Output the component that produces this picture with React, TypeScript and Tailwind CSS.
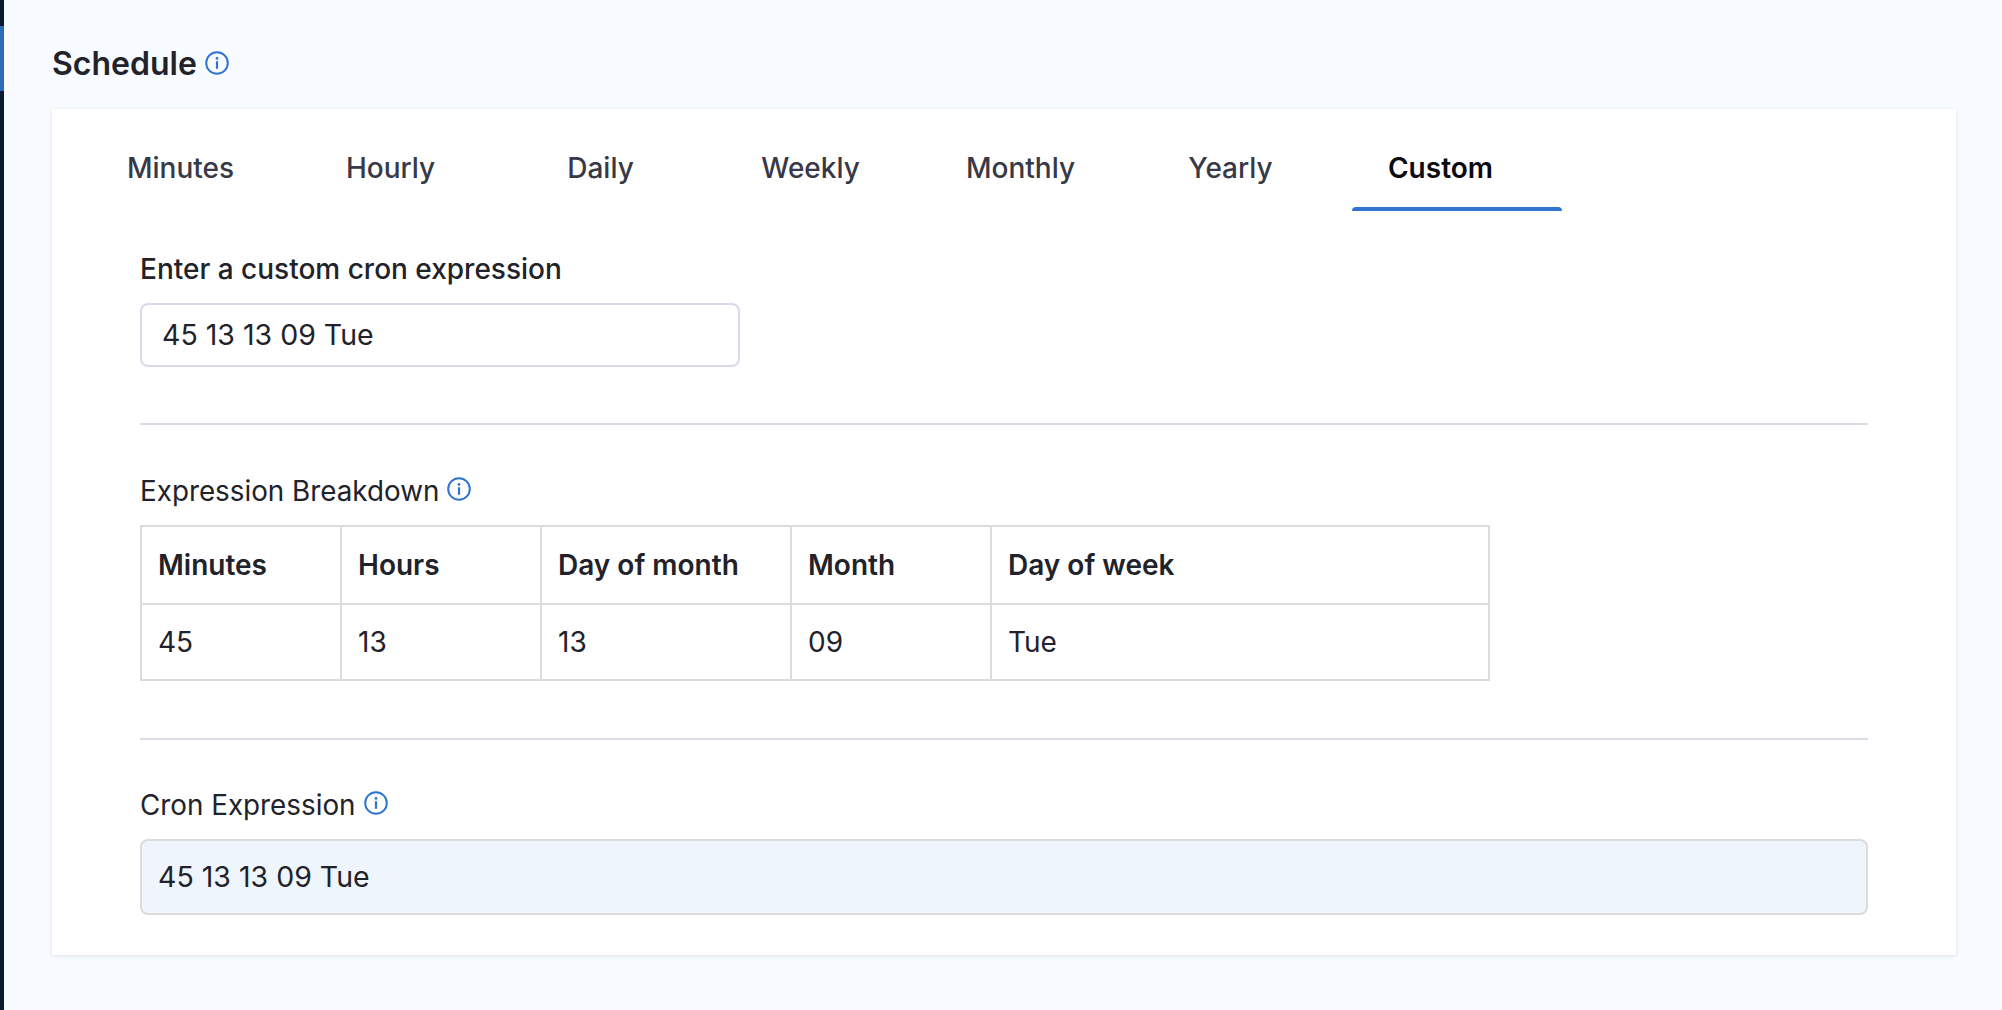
import React from 'react'

const tabs = ['Minutes', 'Hourly', 'Daily', 'Weekly', 'Monthly', 'Yearly', 'Custom']
const columns = [
  { label: 'Minutes', value: '45', width: 'w-[200px]' },
  { label: 'Hours', value: '13', width: 'w-[200px]' },
  { label: 'Day of month', value: '13', width: 'w-[250px]' },
  { label: 'Month', value: '09', width: 'w-[200px]' },
  { label: 'Day of week', value: 'Tue', width: '' },
]

function InfoIcon({ className }: { className: string }) {
  return (
    <svg viewBox="0 0 24 24" fill="none" stroke="#2f74d0" strokeWidth="2" strokeLinecap="round" className={className}>
      <circle cx="12" cy="12" r="10.8" />
      <path d="M12 11v6" strokeWidth="2.2" />
      <circle cx="12" cy="7.4" r="1.4" fill="#2f74d0" stroke="none" />
    </svg>
  )
}

export default function App() {
  return (
    <div className="h-[1010px] flex overflow-hidden bg-[#f8fbff] text-[#22222a] font-['Inter',sans-serif]">
      {/* left nav sliver */}
      <div className="w-1 shrink-0 bg-[#0a1a30] pt-[26px]">
        <div className="h-[65px] bg-[#2d6cb8]" />
      </div>

      <div className="w-[1952px] pl-12">
        <div className="h-[109px] pt-[44px] flex items-start gap-2">
          <h1 className="text-[32px] leading-[40px] font-semibold">Schedule</h1>
          <InfoIcon className="w-6 h-6 mt-[7px]" />
        </div>

        <div className="w-[1904px] h-[846px] bg-white shadow-[0_1px_4px_rgba(30,40,70,0.12)] pt-[42px] px-[40px]">
          <div className="flex h-[60px]">
            {tabs.map((tab) => (
              <div key={tab} className="w-[210px] h-[60px] flex flex-col justify-between">
                <div
                  className={
                    tab === 'Custom'
                      ? 'pr-[33px] text-center text-[28px] leading-[34px] font-semibold text-[#0b0b10]'
                      : 'pr-[33px] text-center text-[28px] leading-[34px] font-medium text-[#383946]'
                  }
                >
                  {tab}
                </div>
                {tab === 'Custom' && <div className="h-1 bg-[#2f74d0] rounded-t" />}
              </div>
            ))}
          </div>

          <div className="pl-[48px] w-[1776px]">
            <label className="block mt-[40px] text-[28px] leading-[36px] font-medium">Enter a custom cron expression</label>
            <div className="mt-4 w-[600px] h-16 pl-[20px] flex items-center border-2 border-[#d9d9ec] rounded-lg text-[28.5px]">
              45 13 13 09 Tue
            </div>

            <div className="mt-14 h-0.5 bg-[#dcdce8]" />

            <div className="mt-[48px] flex items-center gap-2 h-9">
              <span className="text-[27.8px] leading-[36px]">Expression Breakdown</span>
              <InfoIcon className="w-6 h-6 mb-1" />
            </div>

            <div className="mt-4 w-[1350px] border-2 border-[#dcdcdc] flex">
              {columns.map((col, i) => (
                <div key={col.label} className={(i === 4 ? 'flex-1' : col.width + ' border-r-2 border-[#dcdcdc]') + ' shrink-0'}>
                  <div className="h-[78px] px-[16px] flex items-center text-[28px] font-semibold border-b-2 border-[#dcdcdc]">{col.label}</div>
                  <div className="h-[74px] px-[16px] flex items-center text-[28px]">{col.value}</div>
                </div>
              ))}
            </div>

            <div className="mt-[57px] h-0.5 bg-[#dcdce8]" />

            <div className="mt-[47px] flex items-center gap-2 h-9">
              <span className="text-[27.8px] leading-[36px]">Cron Expression</span>
              <InfoIcon className="w-6 h-6 mb-1" />
            </div>

            <div className="mt-4 h-[76px] pl-[16px] flex items-center bg-[#eef5fd] border-2 border-[#dcdcdc] rounded-lg text-[28.5px]">
              45 13 13 09 Tue
            </div>
          </div>
        </div>
      </div>
    </div>
  )
}
